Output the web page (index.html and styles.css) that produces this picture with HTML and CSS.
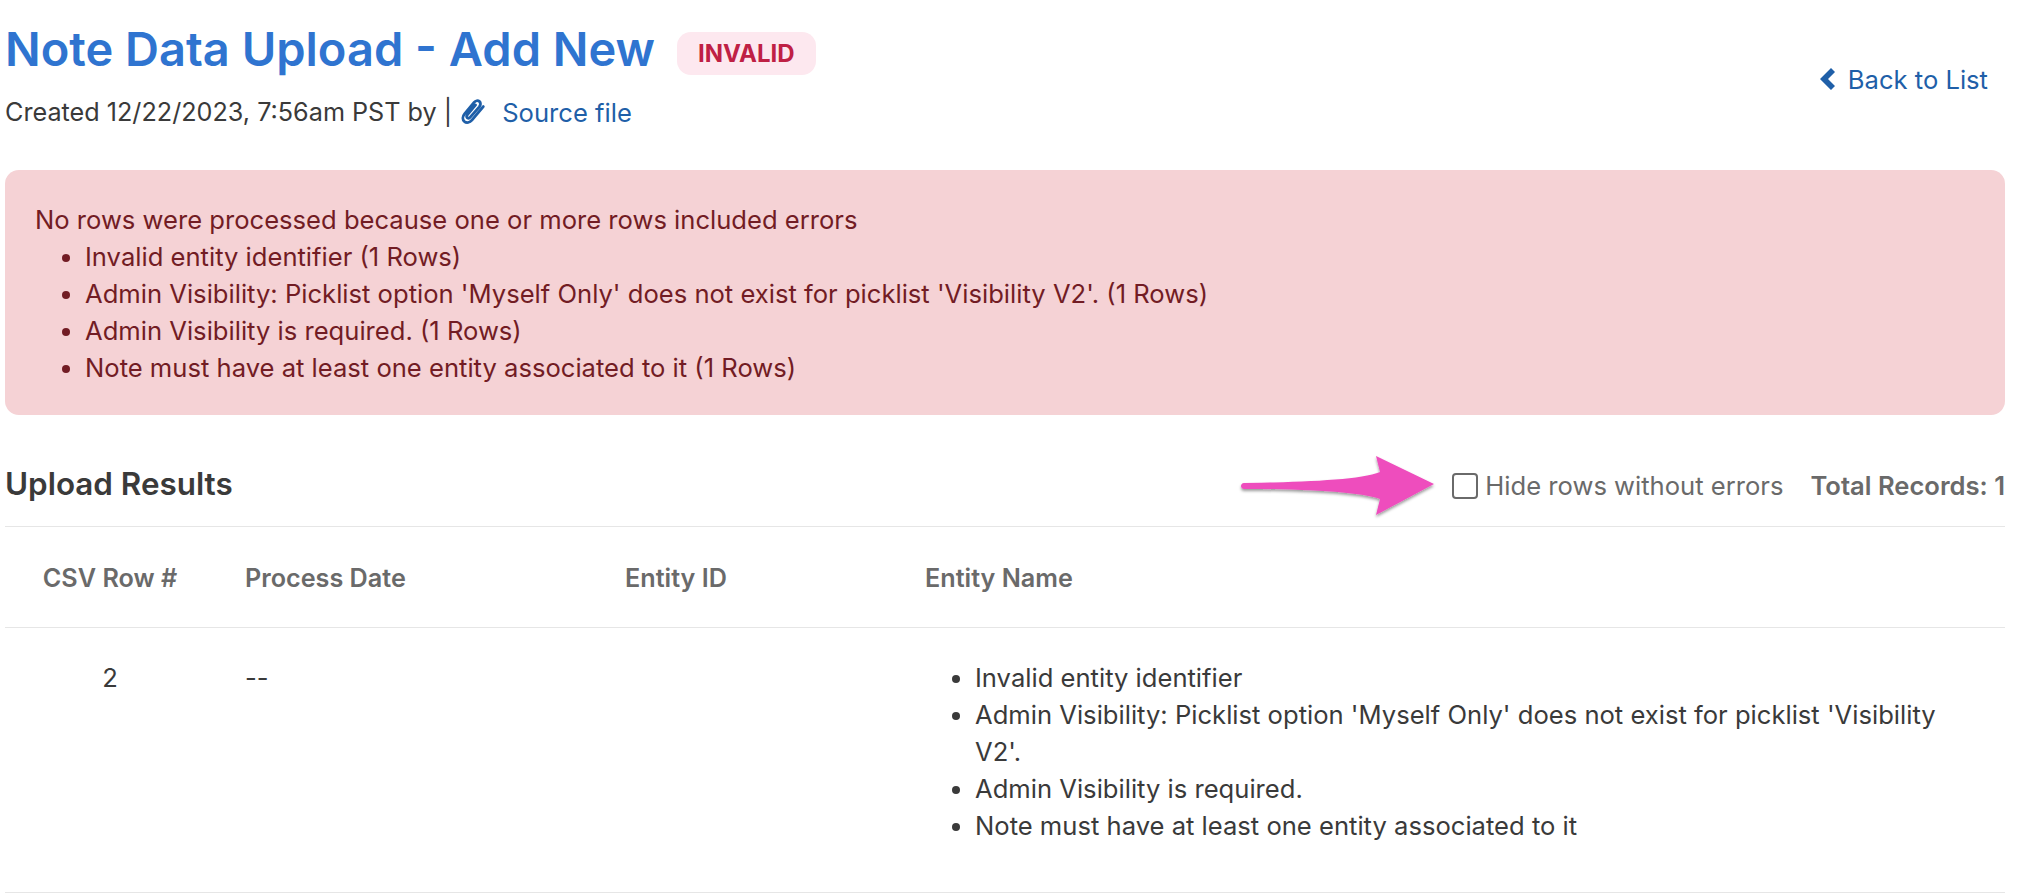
FILE: index.html

```html
<!DOCTYPE html>
<html lang="en">
<head>
    <meta charset="UTF-8">
    <title>Note Data Upload - Add New</title>
    <link rel="stylesheet" href="styles.css">
</head>
<body>
    <!-- Page header -->
    <div class="page-header">
        <div>
            <div class="title-row">
                <h1>Note Data Upload - Add New</h1>
                <span class="badge">INVALID</span>
            </div>
            <div class="meta">
                Created 12/22/2023, 7:56am PST by |
                <svg class="clip-icon" viewBox="0 0 24 24" width="26" height="28" fill="none" stroke="#1f5fa8" stroke-width="2.600" stroke-linecap="round" stroke-linejoin="round"><path d="M21.500 7 11 19.500c-2 2.300-4.900 2.900-6.900 1.300-2-1.700-1.900-4.600.1-7l8.800-10.600c1.400-1.700 3.500-2.100 4.900-1 1.400 1.200 1.300 3.300-.1 5L9.500 16.800c-.8 1-1.900 1.200-2.700.6-.8-.7-.7-1.900.1-2.900l7.500-9"/></svg>
                <a class="link" href="#">Source file</a>
            </div>
        </div>
        <a class="link back-link" href="#">
            <svg viewBox="0 0 16 24" width="17" height="24" fill="#1f5fa8"><path d="M11.500 1 15.500 5 8.500 12l7 7-4 4L.5 12z"/></svg>
            Back to List
        </a>
    </div>

    <!-- Error box -->
    <div class="alert">
        No rows were processed because one or more rows included errors
        <ul>
            <li>Invalid entity identifier (1 Rows)</li>
            <li>Admin Visibility: Picklist option 'Myself Only' does not exist for picklist 'Visibility V2'. (1 Rows)</li>
            <li>Admin Visibility is required. (1 Rows)</li>
            <li>Note must have at least one entity associated to it (1 Rows)</li>
        </ul>
    </div>

    <!-- Results -->
    <div class="results-bar">
        <h2>Upload Results</h2>
        <div class="results-tools">
            <svg class="arrow" viewBox="0 0 202 70" width="202" height="70">
                <defs>
                    <filter id="arrow-shadow" x="-5%" y="-10%" width="110%" height="130%">
                        <feDropShadow dx="0" dy="2" stdDeviation="1.500" flood-color="#000" flood-opacity="0.4"/>
                    </filter>
                </defs>
                <path filter="url(#arrow-shadow)" fill="#ee4dbd" d="M9 32C70 31 125 29 145 21L141 5 199 33 141 64 145 48C125 41 70 38 9 38 5 38 5 32 9 32Z"/>
            </svg>
            <label class="hide-rows"><span class="checkbox"></span>Hide rows without errors</label>
            <span class="total">Total Records: 1</span>
        </div>
    </div>

    <table class="table">
        <thead>
            <tr>
                <th class="col-row">CSV Row #</th>
                <th class="col-date">Process Date</th>
                <th class="col-id">Entity ID</th>
                <th>Entity Name</th>
            </tr>
        </thead>
        <tbody>
            <tr>
                <td class="col-row">2</td>
                <td class="col-date">--</td>
                <td class="col-id"></td>
                <td>
                    <ul>
                        <li>Invalid entity identifier</li>
                        <li>Admin Visibility: Picklist option 'Myself Only' does not exist for picklist 'Visibility V2'.</li>
                        <li>Admin Visibility is required.</li>
                        <li>Note must have at least one entity associated to it</li>
                    </ul>
                </td>
            </tr>
        </tbody>
    </table>
</body>
</html>
```

FILE: styles.css

```css
body {
    margin: 0;
    padding: 0 27px 0 5px;
    background-color: white;
    color: #3a3a3a;
    font-family: Inter, "Liberation Sans", sans-serif;
    font-size: 25.6px;
    line-height: 37px;
    overflow: hidden;
}

/* Header */
.page-header {
    display: flex;
    justify-content: space-between;
    align-items: center;
    height: 148px;
    padding-top: 3px;
    box-sizing: border-box;
}

.title-row {
    display: flex;
    align-items: center;
    gap: 22px;
}

h1 {
    margin: 0;
    font-size: 47px;
    line-height: 56px;
    font-weight: 600;
    color: #2f74d0;
}

.badge {
    margin-top: 10px;
    padding: 0 21px;
    line-height: 43px;
    background-color: #fde8ef;
    color: #bf2044;
    font-size: 24px;
    font-weight: 700;
    border-radius: 14px;
}

.meta {
    display: flex;
    align-items: center;
    gap: 14px;
    margin-top: 17px;
    font-size: 25.2px;
}

.meta .link {
    font-size: 25.6px;
}

.clip-icon {
    margin-left: -6px;
    margin-right: 2px;
}

.link {
    color: #1f5fa8;
    text-decoration: none;
}

.back-link {
    display: flex;
    align-items: center;
    gap: 12px;
    margin-top: 7px;
    margin-right: 17px;
}

/* Alert */
.alert {
    margin-top: 22px;
    padding: 31px 30px 29px;
    background-color: #f5d2d5;
    color: #721c24;
    border-radius: 14px;
}

.alert ul {
    margin: 0;
    padding-left: 50px;
}

/* Results bar */
.results-bar {
    display: flex;
    justify-content: space-between;
    align-items: center;
    height: 112px;
    padding-top: 28px;
    box-sizing: border-box;
    border-bottom: 1px solid #e6e6e6;
}

h2 {
    margin: 0;
    font-size: 31.4px;
    font-weight: 600;
}

.results-tools {
    display: flex;
    align-items: center;
    margin-top: 2px;
    color: #6a6a6a;
}

.arrow {
    margin-right: 15px;
}

.hide-rows {
    display: flex;
    align-items: center;
    gap: 7px;
}

.checkbox {
    width: 26px;
    height: 26px;
    box-sizing: border-box;
    border: 2px solid #6a6a6a;
    border-radius: 4px;
}

.total {
    margin-left: 27px;
    font-weight: 600;
}

/* Table */
.table {
    width: 100%;
    border-collapse: collapse;
    table-layout: fixed;
}

.table th {
    height: 100px;
    padding: 3px 0 0;
    box-sizing: border-box;
    text-align: left;
    font-size: 25.2px;
    font-weight: 600;
    color: #6a6a6a;
}

.table thead tr,
.table tbody tr {
    border-bottom: 1px solid #e6e6e6;
}

.table td {
    padding: 31px 0 48px;
    vertical-align: top;
}

.table td ul {
    margin: 0;
    padding-left: 50px;
    padding-right: 60px;
}

.table .col-row {
    width: 240px;
    padding-right: 30px;
    text-align: center;
    box-sizing: border-box;
}

.table .col-date {
    width: 380px;
}

.table .col-id {
    width: 300px;
}
```
